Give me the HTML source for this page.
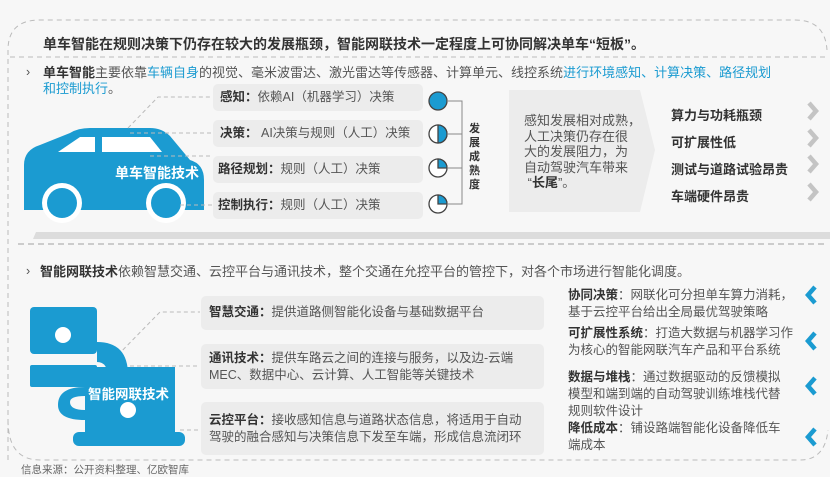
<!DOCTYPE html>
<html><head><meta charset="utf-8"><style>
*{margin:0;padding:0;box-sizing:border-box}
body{width:830px;height:474px;background:#f7f7f7;font-family:"Liberation Sans","Noto Sans CJK SC",sans-serif;color:#555;position:relative;overflow:hidden}
.a{position:absolute;white-space:nowrap}
b{color:#333}
.bl{color:#1b9bd1}
.box{position:absolute;background:#ececec;border-radius:5px}
.t{font-size:12.5px;line-height:17px}
</style></head><body>
<svg class="a" style="left:0;top:0" width="830" height="474">
<path d="M8 460 L8 50 Q8 20 40 20 L795 20 Q825 20 827 50" fill="none" stroke="#bbb" stroke-dasharray="5,4"/>
<path d="M8 420 Q8 460 40 460 L800 460 Q825 460 828 430" fill="none" stroke="#bbb" stroke-dasharray="5,4"/>
<line x1="10" y1="57" x2="828" y2="57" stroke="#bbb" stroke-dasharray="5,4"/>
<polygon points="36,232 830,232 830,239 33,239" fill="#dcdcdc"/>
<line x1="18" y1="244" x2="828" y2="244" stroke="#ccc" stroke-width="2" stroke-dasharray="6,4"/>
<!-- car -->
<path d="M24 165 Q24 150 40 145 L70 133 Q78 128 90 128 L150 128 Q162 128 170 136 L190 160 Q204 164 204 180 L204 210 L24 210 Z" fill="#1b9bd1"/>
<path d="M58 152 L80 137 L95 137 L95 152 Z" fill="#fff"/>
<path d="M102 137 L150 137 L162 152 L102 152 Z" fill="#fff"/>
<circle cx="62" cy="203" r="20" fill="#fff"/><circle cx="62" cy="203" r="15" fill="#1b9bd1"/>
<circle cx="166" cy="203" r="20" fill="#fff"/><circle cx="166" cy="203" r="15" fill="#1b9bd1"/>
<g stroke="#bbb" stroke-dasharray="4,3" fill="none">
<path d="M128 128 L158 97 L212 97"/><line x1="130" y1="133" x2="212" y2="133"/><line x1="150" y1="156" x2="212" y2="156"/><line x1="180" y1="205" x2="212" y2="205"/>
<path d="M113 360 L160 312 L200 312"/><line x1="130" y1="366" x2="200" y2="366"/><line x1="180" y1="430" x2="200" y2="430"/>
</g>
<!-- circles -->
<g stroke="#444" stroke-width="1.3">
<circle cx="438" cy="101" r="9" fill="#1b9bd1"/>
<circle cx="438" cy="134" r="9" fill="#fff"/><path d="M438 125 A9 9 0 0 1 438 143 Z" fill="#1b9bd1"/>
<circle cx="438" cy="168" r="9" fill="#fff"/><path d="M438 159 A9 9 0 0 1 447 168 L438 168 Z" fill="#1b9bd1"/>
<circle cx="438" cy="204" r="9" fill="#fff"/><path d="M438 195 A9 9 0 0 1 447 204 L438 204 Z" fill="#1b9bd1"/>
</g>
<path d="M447 101 L462 101 L462 204 L447 204 M447 134 L462 134 M447 168 L462 168" fill="none" stroke="#888"/>
<polygon points="509,90 640,90 655,150 640,212 509,212" fill="#ececec"/>
<!-- chevrons -->
<g fill="none" stroke="#c4c4c4" stroke-width="4.5">
<polyline points="809,103 816,111 809,119"/>
<polyline points="809,130 816,138 809,146"/>
<polyline points="809,156 816,164 809,172"/>
<polyline points="809,184 816,192 809,200"/>
</g>
<g fill="none" stroke="#1b9bd1" stroke-width="4.5">
<polyline points="815,287 808,295 815,303"/>
<polyline points="815,333 808,341 815,349"/>
<polyline points="815,378 808,386 815,394"/>
<polyline points="815,429 808,437 815,445"/>
</g>
<!-- network icon -->
<g fill="#1b9bd1">
<rect x="30" y="307" width="67" height="47" rx="4"/>
<rect x="30" y="365" width="67" height="22" rx="2"/>
<path d="M97 342 Q128 342 128 375 L128 387 L108 387 L108 378 Q108 362 97 362 Z"/>
<path d="M85 367 L175 367 L175 435 L85 435 Z"/>
<path d="M85 387 Q58 387 58 405 Q58 420 85 420 L85 410 Q70 410 70 402 Q70 396 85 396 Z"/>
<rect x="73" y="432" width="112" height="14" rx="6"/>
</g>
<circle cx="63" cy="335" r="8" fill="#fff"/>
<circle cx="128" cy="410" r="8" fill="#fff"/>
</svg>
<div class="a" style="left:43px;top:34px;font-size:14px;font-weight:bold;color:#333">单车智能在规则决策下仍存在较大的发展瓶颈，智能网联技术一定程度上可协同解决单车“短板”。</div>
<div class="a t" style="left:26px;top:64px;color:#555">›</div>
<div class="a t" style="left:43px;top:64px;font-size:13px"><b>单车智能</b>主要依靠<span class="bl">车辆自身</span>的视觉、毫米波雷达、激光雷达等传感器、计算单元、线控系统<span class="bl">进行环境感知、计算决策、路径规划</span></div>
<div class="a t" style="left:43px;top:80px;font-size:13px"><span class="bl">和控制执行</span>。</div>
<div class="a" style="left:115px;top:163px;color:#fff;font-weight:bold;font-size:14px">单车智能技术</div>
<div class="box" style="left:213px;top:84px;width:210px;height:27px"></div>
<div class="box" style="left:213px;top:120px;width:210px;height:27px"></div>
<div class="box" style="left:213px;top:156px;width:210px;height:27px"></div>
<div class="box" style="left:213px;top:192px;width:210px;height:27px"></div>
<div class="a t" style="left:220px;top:89px"><b>感知：</b>依赖AI（机器学习）决策</div>
<div class="a t" style="left:220px;top:125px"><b>决策：</b> AI决策与规则（人工）决策</div>
<div class="a t" style="left:218px;top:161px"><b>路径规划：</b>规则（人工）决策</div>
<div class="a t" style="left:218px;top:197px"><b>控制执行：</b>规则（人工）决策</div>
<div class="a" style="left:469px;top:122px;width:12px;font-size:11px;line-height:14px;font-weight:bold;color:#333;white-space:normal">发展成熟度</div>
<div class="a" style="left:524px;top:113px;font-size:13px;line-height:15.5px;color:#555">感知发展相对成熟，<br>人工决策仍存在很<br>大的发展阻力，为<br>自动驾驶汽车带来<br>&nbsp;“<b>长尾</b>”。</div>
<div class="a" style="left:671px;top:102px;font-size:13px;font-weight:bold;color:#333;line-height:27px">算力与功耗瓶颈<br>可扩展性低<br>测试与道路试验昂贵<br>车端硬件昂贵</div>
<div class="a t" style="left:26px;top:263px">›</div>
<div class="a t" style="left:40px;top:263px;font-size:13px"><b>智能网联技术</b>依赖智慧交通、云控平台与通讯技术，整个交通在允控平台的管控下，对各个市场进行智能化调度。</div>
<div class="a" style="left:88px;top:383px;color:#fff;font-weight:bold;font-size:13.5px">智能网联技术</div>
<div class="box" style="left:201px;top:296px;width:343px;height:34px"></div>
<div class="box" style="left:201px;top:344px;width:343px;height:45px"></div>
<div class="box" style="left:201px;top:402px;width:343px;height:53px"></div>
<div class="a t" style="left:209px;top:304px"><b>智慧交通：</b>提供道路侧智能化设备与基础数据平台</div>
<div class="a t" style="left:209px;top:350px"><b>通讯技术：</b>提供车路云之间的连接与服务，以及边-云端<br>MEC、数据中心、云计算、人工智能等关键技术</div>
<div class="a t" style="left:209px;top:412px"><b>云控平台：</b>接收感知信息与道路状态信息，将适用于自动<br>驾驶的融合感知与决策信息下发至车端，形成信息流闭环</div>
<div class="a t" style="left:568px;top:287px"><b>协同决策</b>：网联化可分担单车算力消耗，<br>基于云控平台给出全局最优驾驶策略</div>
<div class="a t" style="left:568px;top:325px"><b>可扩展性系统</b>：打造大数据与机器学习作<br>为核心的智能网联汽车产品和平台系统</div>
<div class="a t" style="left:568px;top:369px"><b>数据与堆栈</b>：通过数据驱动的反馈模拟<br>模型和端到端的自动驾驶训练堆栈代替<br>规则软件设计</div>
<div class="a t" style="left:568px;top:420px"><b>降低成本</b>：铺设路端智能化设备降低车<br>端成本</div>
<div class="a" style="left:21px;top:462px;font-size:10.5px;color:#666">信息来源：公开资料整理、亿欧智库</div>
</body></html>
